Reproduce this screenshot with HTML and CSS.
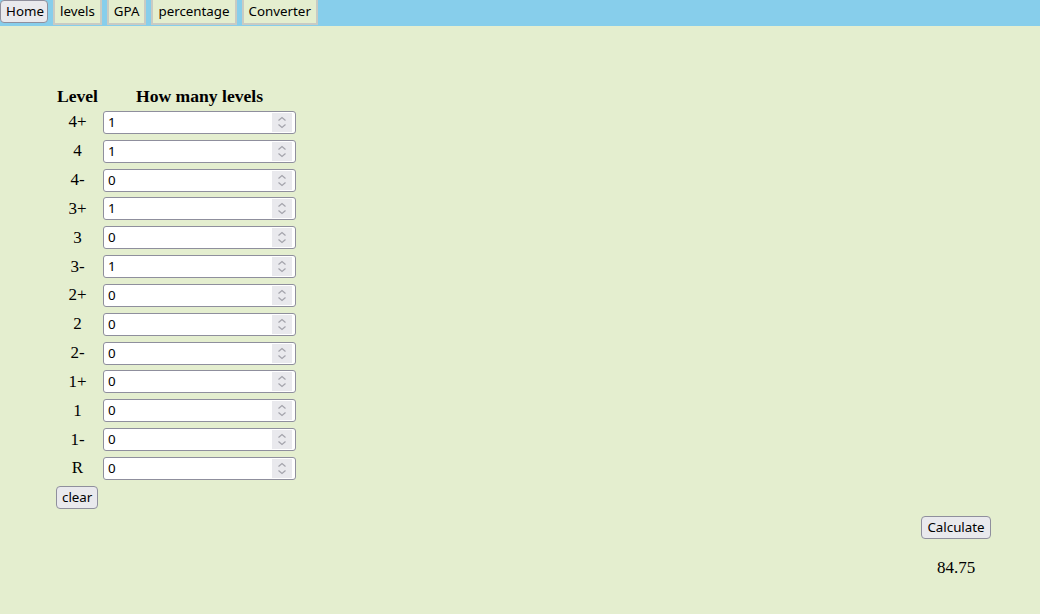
FILE: index.html
```html
<!DOCTYPE html>
<html>
<head>
<meta charset="utf-8">
<link rel="stylesheet" href="styles.css">
</head>
<body>
<nav class="nav">
  <button class="btn nav-home">Home</button>
  <button class="nav-tab">levels</button>
  <button class="nav-tab">GPA</button>
  <button class="nav-tab">percentage</button>
  <button class="nav-tab">Converter</button>
</nav>
<main class="main">
  <div class="levels">
    <div class="head">Level</div><div class="head">How many levels</div>
    <div class="lvl">4+</div><div class="cell"><div class="num"><input type="number" value="1"><svg class="spin" width="20" height="19" viewBox="0 0 20 19"><rect width="20" height="19" fill="#e9e9ed"/><path d="M6.5 7.5 L10 4.5 L13.5 7.5 M6.5 11.5 L10 14.5 L13.5 11.5" fill="none" stroke="#a3a3ab" stroke-width="1.2"/></svg></div></div>
    <div class="lvl">4</div><div class="cell"><div class="num"><input type="number" value="1"><svg class="spin" width="20" height="19" viewBox="0 0 20 19"><rect width="20" height="19" fill="#e9e9ed"/><path d="M6.5 7.5 L10 4.5 L13.5 7.5 M6.5 11.5 L10 14.5 L13.5 11.5" fill="none" stroke="#a3a3ab" stroke-width="1.2"/></svg></div></div>
    <div class="lvl">4-</div><div class="cell"><div class="num"><input type="number" value="0"><svg class="spin" width="20" height="19" viewBox="0 0 20 19"><rect width="20" height="19" fill="#e9e9ed"/><path d="M6.5 7.5 L10 4.5 L13.5 7.5 M6.5 11.5 L10 14.5 L13.5 11.5" fill="none" stroke="#a3a3ab" stroke-width="1.2"/></svg></div></div>
    <div class="lvl">3+</div><div class="cell"><div class="num"><input type="number" value="1"><svg class="spin" width="20" height="19" viewBox="0 0 20 19"><rect width="20" height="19" fill="#e9e9ed"/><path d="M6.5 7.5 L10 4.5 L13.5 7.5 M6.5 11.5 L10 14.5 L13.5 11.5" fill="none" stroke="#a3a3ab" stroke-width="1.2"/></svg></div></div>
    <div class="lvl">3</div><div class="cell"><div class="num"><input type="number" value="0"><svg class="spin" width="20" height="19" viewBox="0 0 20 19"><rect width="20" height="19" fill="#e9e9ed"/><path d="M6.5 7.5 L10 4.5 L13.5 7.5 M6.5 11.5 L10 14.5 L13.5 11.5" fill="none" stroke="#a3a3ab" stroke-width="1.2"/></svg></div></div>
    <div class="lvl">3-</div><div class="cell"><div class="num"><input type="number" value="1"><svg class="spin" width="20" height="19" viewBox="0 0 20 19"><rect width="20" height="19" fill="#e9e9ed"/><path d="M6.5 7.5 L10 4.5 L13.5 7.5 M6.5 11.5 L10 14.5 L13.5 11.5" fill="none" stroke="#a3a3ab" stroke-width="1.2"/></svg></div></div>
    <div class="lvl">2+</div><div class="cell"><div class="num"><input type="number" value="0"><svg class="spin" width="20" height="19" viewBox="0 0 20 19"><rect width="20" height="19" fill="#e9e9ed"/><path d="M6.5 7.5 L10 4.5 L13.5 7.5 M6.5 11.5 L10 14.5 L13.5 11.5" fill="none" stroke="#a3a3ab" stroke-width="1.2"/></svg></div></div>
    <div class="lvl">2</div><div class="cell"><div class="num"><input type="number" value="0"><svg class="spin" width="20" height="19" viewBox="0 0 20 19"><rect width="20" height="19" fill="#e9e9ed"/><path d="M6.5 7.5 L10 4.5 L13.5 7.5 M6.5 11.5 L10 14.5 L13.5 11.5" fill="none" stroke="#a3a3ab" stroke-width="1.2"/></svg></div></div>
    <div class="lvl">2-</div><div class="cell"><div class="num"><input type="number" value="0"><svg class="spin" width="20" height="19" viewBox="0 0 20 19"><rect width="20" height="19" fill="#e9e9ed"/><path d="M6.5 7.5 L10 4.5 L13.5 7.5 M6.5 11.5 L10 14.5 L13.5 11.5" fill="none" stroke="#a3a3ab" stroke-width="1.2"/></svg></div></div>
    <div class="lvl">1+</div><div class="cell"><div class="num"><input type="number" value="0"><svg class="spin" width="20" height="19" viewBox="0 0 20 19"><rect width="20" height="19" fill="#e9e9ed"/><path d="M6.5 7.5 L10 4.5 L13.5 7.5 M6.5 11.5 L10 14.5 L13.5 11.5" fill="none" stroke="#a3a3ab" stroke-width="1.2"/></svg></div></div>
    <div class="lvl">1</div><div class="cell"><div class="num"><input type="number" value="0"><svg class="spin" width="20" height="19" viewBox="0 0 20 19"><rect width="20" height="19" fill="#e9e9ed"/><path d="M6.5 7.5 L10 4.5 L13.5 7.5 M6.5 11.5 L10 14.5 L13.5 11.5" fill="none" stroke="#a3a3ab" stroke-width="1.2"/></svg></div></div>
    <div class="lvl">1-</div><div class="cell"><div class="num"><input type="number" value="0"><svg class="spin" width="20" height="19" viewBox="0 0 20 19"><rect width="20" height="19" fill="#e9e9ed"/><path d="M6.5 7.5 L10 4.5 L13.5 7.5 M6.5 11.5 L10 14.5 L13.5 11.5" fill="none" stroke="#a3a3ab" stroke-width="1.2"/></svg></div></div>
    <div class="lvl">R</div><div class="cell"><div class="num"><input type="number" value="0"><svg class="spin" width="20" height="19" viewBox="0 0 20 19"><rect width="20" height="19" fill="#e9e9ed"/><path d="M6.5 7.5 L10 4.5 L13.5 7.5 M6.5 11.5 L10 14.5 L13.5 11.5" fill="none" stroke="#a3a3ab" stroke-width="1.2"/></svg></div></div>
  </div>
  <button class="btn clear">clear</button>
  <div class="result">
    <button class="btn calc">Calculate</button>
    <p class="value">84.75</p>
  </div>
</main>
</body>
</html>
```

FILE: styles.css
```css
html, body {
  margin: 0;
  padding: 0;
}
body {
  background: #e4eecf;
  font-family: "Liberation Serif", "Times New Roman", serif;
  font-size: 17px;
  color: #000;
}
button, input {
  font-family: "Noto Sans", "Open Sans", sans-serif;
  font-size: 13.33px;
  color: #000;
}
.btn {
  background: #e9e9ed;
  border: 1px solid #8f8f9d;
  border-radius: 4px;
  height: 23px;
  padding: 0 5px;
  margin: 0;
  line-height: 19px;
}
.nav {
  background: #87ceeb;
  height: 26px;
  display: flex;
  align-items: flex-start;
  gap: 5px;
}
.nav-tab {
  background: #e4eecf;
  border: 2px solid #c9cbc3;
  border-top: none;
  border-radius: 0;
  height: 25px;
  padding: 0 5px;
  margin: 0;
  line-height: 23px;
}
.nav-home {
  padding: 0 5px;
  width: 48px;
}
.main {
  padding: 57px 0 0 56px;
}
.levels {
  display: grid;
  grid-template-columns: 43px 193px;
  grid-template-rows: 25px;
  grid-auto-rows: 28.833px;
  column-gap: 4px;
  width: max-content;
}
.head {
  font-weight: bold;
  font-size: 17.6px;
  text-align: center;
  line-height: 20px;
  align-self: center;
  white-space: nowrap;
}
.lvl {
  text-align: center;
  align-self: center;
  line-height: 20px;
}
.cell {
  align-self: center;
}
.num {
  display: flex;
  align-items: center;
  box-sizing: border-box;
  width: 193px;
  height: 23px;
  padding: 1px 3px 1px 4px;
  background: #fff;
  border: 1px solid #8f8f9d;
  border-radius: 3px;
}
.num input {
  flex: 1;
  min-width: 0;
  border: none;
  outline: none;
  padding: 0;
  margin: 0;
  background: transparent;
  height: 19px;
  line-height: 19px;
  -moz-appearance: textfield;
}
.num input::-webkit-inner-spin-button,
.num input::-webkit-outer-spin-button {
  -webkit-appearance: none;
  margin: 0;
}
.spin {
  flex: none;
  display: block;
}
.clear {
  margin-top: 3px;
  display: block;
}
.result {
  display: flex;
  flex-direction: column;
  align-items: center;
  width: 70px;
  margin: 7px 49px 0 auto;
}
.calc {
  width: 70px;
}
.value {
  margin: 19px 0 0 0;
  line-height: 20px;
}
```
